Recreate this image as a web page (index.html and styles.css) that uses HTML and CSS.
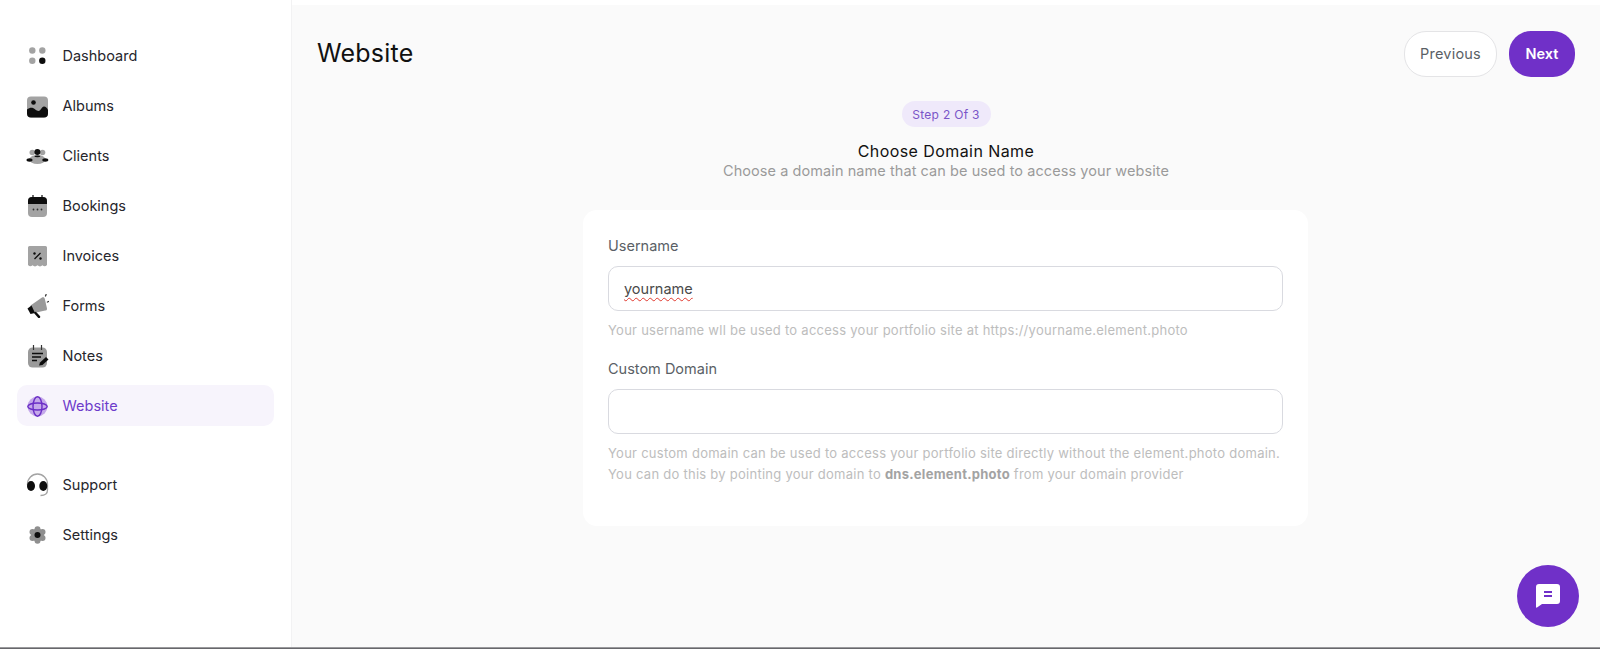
FILE: index.html
```html
<!DOCTYPE html>
<html lang="en">
<head>
<meta charset="utf-8">
<title>Website</title>
<link rel="stylesheet" href="styles.css">
</head>
<body>
<div class="app">
  <aside class="sidebar">
    <nav class="nav">
      <a class="nav-item"><svg class="icon" viewBox="0 0 24 24"><circle cx="7.300" cy="6.500" r="3.200" fill="#a3a3a3"/><circle cx="17.300" cy="6.500" r="3.200" fill="#a3a3a3"/><circle cx="7.300" cy="16.700" r="3.200" fill="#a3a3a3"/><circle cx="17.300" cy="16.700" r="3.200" fill="#0d0d0d"/></svg>Dashboard</a>
      <a class="nav-item"><svg class="icon" viewBox="0 0 24 24"><rect x="2" y="2.500" width="21" height="21" rx="4" fill="#a3a3a3"/><path d="M2 15.500c2-1.500 4-2 6-1.500 2 .6 3 3 5.500 3 2.500 0 3-4.500 5.500-4.500 1.800 0 3 1.500 4 3.500v3.500a4 4 0 0 1-4 4H6a4 4 0 0 1-4-4z" fill="#0d0d0d"/><circle cx="8.500" cy="8.500" r="2.300" fill="#0d0d0d"/></svg>Albums</a>
      <a class="nav-item"><svg class="icon" viewBox="0 0 24 24"><circle cx="7.300" cy="8.500" r="2.800" fill="#a3a3a3"/><circle cx="17.500" cy="8.500" r="2.800" fill="#a3a3a3"/><ellipse cx="12.400" cy="15.500" rx="8" ry="4.600" fill="#a3a3a3"/><ellipse cx="4.500" cy="16" rx="3" ry="1.700" fill="#0d0d0d"/><ellipse cx="20.300" cy="16" rx="3" ry="1.700" fill="#0d0d0d"/><circle cx="12.400" cy="8" r="3" fill="#0d0d0d"/><ellipse cx="12.400" cy="12.300" rx="3" ry=".9" fill="#0d0d0d"/></svg>Clients</a>
      <a class="nav-item"><svg class="icon" viewBox="0 0 24 24"><rect x="3" y="3" width="19" height="20" rx="4" fill="#a3a3a3"/><path d="M3 10V7a4 4 0 0 1 4-4h11a4 4 0 0 1 4 4v3z" fill="#0d0d0d"/><path d="M8 1v3M17 1v3" stroke="#0d0d0d" stroke-width="1.200"/><circle cx="8.500" cy="15.500" r=".9" fill="#333"/><circle cx="12.500" cy="15.500" r=".9" fill="#333"/><circle cx="16.500" cy="15.500" r=".9" fill="#333"/></svg>Bookings</a>
      <a class="nav-item"><svg class="icon" viewBox="0 0 24 24"><path d="M3 3.500a1.500 1.500 0 0 1 1.500-1.500h16a1.500 1.500 0 0 1 1.500 1.500V21c-1.500 1.500-3 1.500-4.500.3-1.700 1.500-3.300 1.500-5 0-1.700 1.500-3.300 1.500-5 0C6 22.500 4.500 22.500 3 21z" fill="#a3a3a3"/><path d="M9.500 15l6-6" stroke="#0d0d0d" stroke-width="1.300"/><circle cx="9.500" cy="9.500" r="1.200" fill="#0d0d0d"/><circle cx="15.500" cy="14.500" r="1.200" fill="#0d0d0d"/></svg>Invoices</a>
      <a class="nav-item"><svg class="icon" viewBox="0 0 24 24"><path d="M5.500 11.500L17 3.500c1.500-.8 2.500 0 2.800 1.200L22 14.500c.2 1.200-.5 2-1.800 2.100L9 19z" fill="#9a9a9a"/><path d="M2.500 14.500l4-3 3.500 7.500-4.500 1z" fill="#0d0d0d"/><path d="M10.500 19l3.500 3.800" stroke="#0d0d0d" stroke-width="2.500" stroke-linecap="round"/><path d="M20.500 2l.6-1.400M23.800 7.500l-1.400.5" stroke="#333" stroke-width="1.300" stroke-linecap="round"/></svg>Forms</a>
      <a class="nav-item"><svg class="icon" viewBox="0 0 24 24"><rect x="3" y="3.500" width="19" height="20" rx="4.500" fill="#9a9a9a"/><path d="M8.500 1v5M16.500 1v5" stroke="#333" stroke-width="1.200"/><path d="M7 9.500h11M7 13h9M7 16.500h5" stroke="#0d0d0d" stroke-width="1.500"/><path d="M14 21.500l1-3 6-5.500 2.500 2.500-6 5.500z" fill="#0d0d0d"/></svg>Notes</a>
      <a class="nav-item active"><svg class="icon" viewBox="0 0 24 24"><circle cx="12.500" cy="12.500" r="10" fill="#c5a9ea"/><ellipse cx="12.500" cy="12.500" rx="9.700" ry="3.500" fill="none" stroke="#6b2fc6" stroke-width="1.400"/><ellipse cx="12.500" cy="12.500" rx="4.500" ry="9.700" fill="none" stroke="#6b2fc6" stroke-width="1.400"/></svg>Website</a>
      <a class="nav-item nav-gap"><svg class="icon" viewBox="0 0 24 24"><path d="M2.500 12V11a10 10 0 0 1 20 0v6c0 4-3 5.500-7 5.500" fill="none" stroke="#a3a3a3" stroke-width="1.300"/><ellipse cx="6" cy="13" rx="4" ry="5" fill="#0d0d0d"/><ellipse cx="18.300" cy="13" rx="4" ry="5" fill="#0d0d0d"/></svg>Support</a>
      <a class="nav-item"><svg class="icon flower" viewBox="0 0 24 24"><circle cx="12.500" cy="12" r="6.500"/><circle cx="12.500" cy="6.200" r="3"/><circle cx="12.500" cy="17.800" r="3"/><circle cx="7.500" cy="9.100" r="3"/><circle cx="17.500" cy="9.100" r="3"/><circle cx="7.500" cy="14.900" r="3"/><circle cx="17.500" cy="14.900" r="3"/><circle class="flower-core" cx="12.500" cy="12" r="3"/></svg>Settings</a>
    </nav>
  </aside>
  <main class="main">
    <header class="topbar">
      <h1 class="title">Website</h1>
      <div class="actions">
        <button class="btn btn-ghost" type="button">Previous</button>
        <button class="btn btn-primary" type="button">Next</button>
      </div>
    </header>
    <section class="content">
      <span class="step">Step 2 Of 3</span>
      <h2 class="heading">Choose Domain Name</h2>
      <p class="sub">Choose a domain name that can be used to access your website</p>
      <form class="card">
        <div class="label">Username</div>
        <div class="input"><span class="misspelt">yourname</span></div>
        <p class="help">Your username wll be used to access your portfolio site at https://yourname.element.photo</p>
        <div class="label second">Custom Domain</div>
        <div class="input"></div>
        <p class="help">Your custom domain can be used to access your portfolio site directly without the element.photo domain.<br>You can do this by pointing your domain to <b>dns.element.photo</b> from your domain provider</p>
      </form>
    </section>
    <button class="chat" type="button" aria-label="Chat"><svg viewBox="0 0 24 24" width="24" height="24"><path d="M3 0h18a3 3 0 0 1 3 3v14a3 3 0 0 1-3 3H6l-5 3.500a.6.6 0 0 1-1-.5V3a3 3 0 0 1 3-3z" fill="#fff"/><path d="M8 8h8M8 12h8" stroke="#7030c8" stroke-width="2"/></svg></button>
  </main>
</div>
</body>
</html>
```

FILE: styles.css
```css
* { box-sizing: border-box; }
html, body { margin: 0; height: 649px; overflow: hidden; }
body {
  font-family: Inter, "Liberation Sans", sans-serif;
  background: #fff;
  color: #1a1a1a;
  border-bottom: 1px solid #67676b;
}
.app {
  display: flex;
  height: 648px;
  border-bottom: 1px solid #9a9a9d;
}
.sidebar {
  width: 292px;
  flex: none;
  background: #fff;
  border-right: 1px solid #f2f2f3;
  padding: 35px 17px 0;
}
.nav { display: flex; flex-direction: column; gap: 9px; }
.nav-item {
  display: flex;
  align-items: center;
  gap: 13.5px;
  height: 41px;
  width: 257px;
  padding-left: 8px;
  border-radius: 10px;
  font-size: 14.5px;
  color: #26262c;
}
.nav-gap { margin-top: 29px; }
.icon { width: 24px; height: 24px; flex: none; }
.flower { fill: #8f8f8f; }
.flower-core { fill: #0d0d0d; }
.active { background: #f7f4fc; color: #6d3ccb; }
.main {
  flex: 1;
  position: relative;
  background: #fafafa;
  border-top: 5px solid #fff;
}
.topbar {
  display: flex;
  justify-content: space-between;
  align-items: center;
  padding: 26px 25px 0;
}
.title {
  margin: -3px 0 0;
  font-size: 25px;
  font-weight: 400;
  letter-spacing: .2px;
  color: #111;
}
.actions { display: flex; gap: 12px; }
.btn {
  height: 46px;
  padding: 0 0 2px;
  font-family: inherit;
  font-size: 14.5px;
  border-radius: 22px;
}
.btn-ghost {
  width: 93px;
  background: #fff;
  border: 1px solid #e4e4e6;
  color: #5a5f66;
  font-weight: 400;
  letter-spacing: .2px;
}
.btn-primary {
  width: 66px;
  background: #7030c8;
  border: 0;
  color: #fff;
  font-weight: 600;
}
.content {
  display: flex;
  flex-direction: column;
  align-items: center;
}
.step {
  margin-top: 24px;
  height: 26px;
  width: 89px;
  display: flex;
  align-items: center;
  justify-content: center;
  border-radius: 13px;
  background: #efe9fa;
  color: #7a55c8;
  font-size: 12px;
  letter-spacing: .3px;
}
.heading {
  margin: 14px 0 0;
  font-size: 16px;
  line-height: 20px;
  font-weight: 400;
  letter-spacing: .42px;
  color: #111;
}
.sub {
  margin: 0;
  font-size: 14.5px;
  line-height: 20px;
  letter-spacing: .07px;
  color: #9a9a9a;
}
.card {
  margin: 29px 1px 0 0;
  width: 725px;
  background: #fff;
  border-radius: 14px;
  padding: 26px 25px 41px;
}
.label {
  font-size: 14.5px;
  line-height: 20px;
  color: #5a5f66;
}
.second { margin-top: 18px; }
.input {
  display: flex;
  align-items: center;
  width: 100%;
  height: 45px;
  margin-top: 10px;
  padding: 0 15px;
  border: 1px solid #d9dae0;
  border-radius: 10px;
  background: #fff;
  font-size: 14.5px;
  color: #4a4a4a;
}
.misspelt {
  text-decoration: underline wavy #e0392f 1px;
  text-underline-offset: 3px;
}
.help {
  margin: 9px 0 0;
  font-size: 13px;
  line-height: 21px;
  letter-spacing: .26px;
  color: #bdbdbd;
}
.help b { color: #a3a3a3; font-weight: 700; }
.chat {
  position: absolute;
  right: 21px;
  bottom: 20px;
  width: 62px;
  height: 62px;
  border: 0;
  padding: 0;
  border-radius: 50%;
  background: #7030c8;
  display: flex;
  align-items: center;
  justify-content: center;
}
```
